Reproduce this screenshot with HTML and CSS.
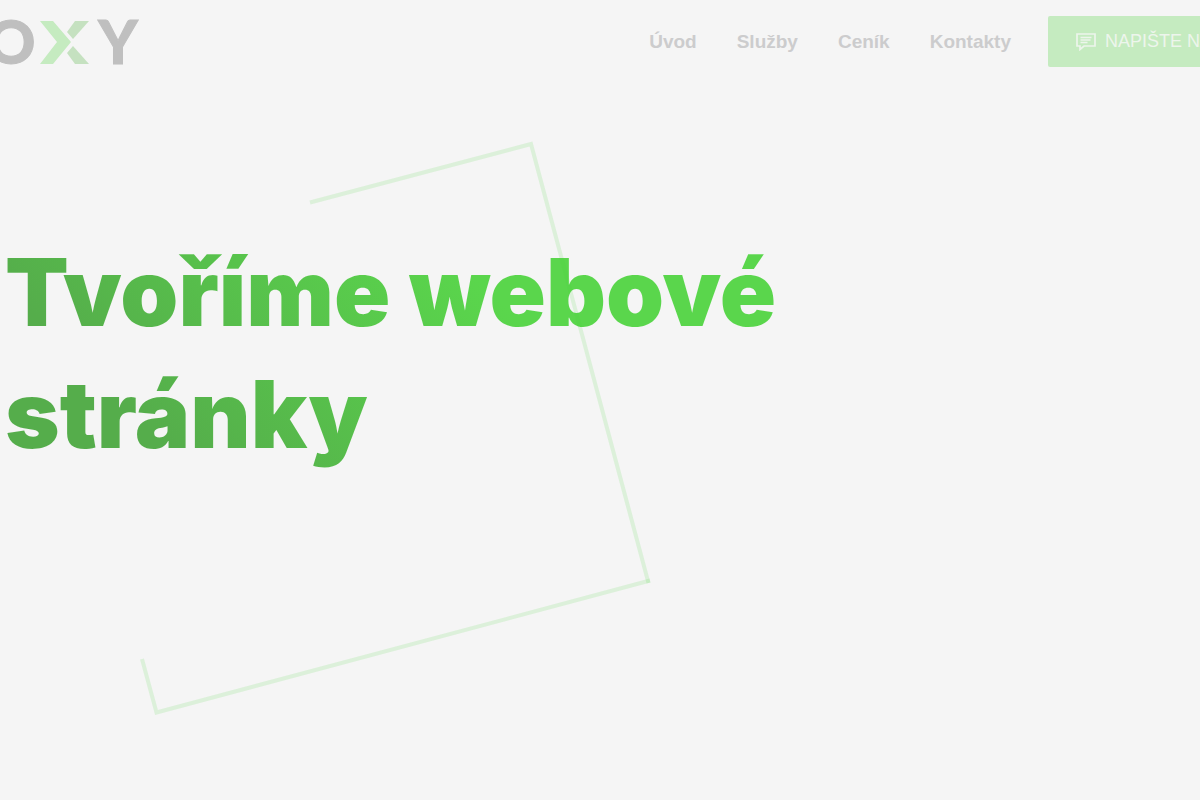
FILE: index.html
```html
<!DOCTYPE html>
<html lang="cs">
<head>
    <meta charset="UTF-8">
    <meta name="viewport" content="width=device-width, initial-scale=1.0">
    <title>OXY - Tvoříme webové stránky</title>
    <link rel="stylesheet" href="styles.css">
</head>
<body>
    <!-- Header -->
    <header class="header">
        <a class="logo" href="#" aria-label="OXY">
            <svg width="140" height="48" viewBox="0 0 140 48">
                <text class="logo-letter" x="11" y="46" text-anchor="middle">O</text>
                <polygon fill="#c5ebc0" points="40,3 53,3 71,24 53,46 40,46 57,24"/>
                <polygon fill="#c5e1c0" points="75,3 89,3 73,21 67,14"/>
                <polygon fill="#c5e1c0" points="67,35 73,28 89,46 75,46"/>
                <text class="logo-letter" x="118" y="46" text-anchor="middle">Y</text>
            </svg>
        </a>
        <nav class="menu">
            <a href="#">Úvod</a>
            <a href="#">Služby</a>
            <a href="#">Ceník</a>
            <a href="#">Kontakty</a>
        </nav>
        <button class="contact-button" type="button">
            <svg width="20" height="18" viewBox="0 0 20 18" fill="none" stroke="currentColor" stroke-width="1.7">
                <path d="M1 1h18v12H8l-4 3.500V13H1z"/>
                <path d="M4.500 4.500h11M4.500 7h10M4.500 9.500h7"/>
            </svg>
            NAPIŠTE NÁM
        </button>
    </header>

    <!-- Hero -->
    <main class="hero">
        <h1>Tvoříme webové<br>stránky</h1>
    </main>

    <!-- Rotated frame over the hero -->
    <svg class="frame" width="660" height="720" viewBox="0 0 660 720" aria-hidden="true">
        <path d="M310 202.500L531 144L648.500 583"/>
        <path d="M650 580.500L156.500 712.500L142 659"/>
    </svg>
</body>
</html>
```
FILE: styles.css
```css
body {
    margin: 0;
    font-family: "Liberation Sans", Arial, sans-serif;
    background-color: #f5f5f5;
    overflow: hidden;
}

/* Header */
.header {
    display: flex;
    align-items: center;
    margin-right: -55px; /* runs past the right edge */
    padding: 16px 0;
}

.logo svg {
    display: block;
}

.logo-letter {
    font-family: Lato, sans-serif;
    font-size: 60px;
    font-weight: 900;
    fill: #bfbfbf;
    stroke: #bfbfbf;
    stroke-width: 1px;
}

.menu {
    display: flex;
    gap: 40px;
    margin-left: auto;
    margin-right: 37px;
}

.menu a {
    color: #cccccd;
    font-size: 19px;
    font-weight: bold;
    text-decoration: none;
}

.contact-button {
    display: flex;
    align-items: center;
    gap: 9px;
    height: 51px;
    padding: 0 28px;
    border: none;
    border-radius: 2px;
    background-color: #c5ebc0;
    color: #edf5ec;
    font-family: inherit;
    font-size: 18px;
    white-space: nowrap;
    cursor: pointer;
}

/* Hero */
.hero {
    max-width: 800px;
    padding: 148px 5px 0;
}

.hero h1 {
    margin: 0;
    font-family: Inter, sans-serif;
    font-size: 93px;
    font-weight: 900;
    line-height: 122px;
    white-space: nowrap;
    color: transparent;
    background-image: linear-gradient(45deg, #55ad4b 18%, #5ad64c 64%);
    -webkit-background-clip: text;
    background-clip: text;
}

/* Rotated frame */
.frame {
    position: absolute;
    top: 0;
    left: 0;
    pointer-events: none;
}

.frame path {
    fill: none;
    stroke: #46d23c;
    stroke-opacity: 0.14;
    stroke-width: 4;
}
```
